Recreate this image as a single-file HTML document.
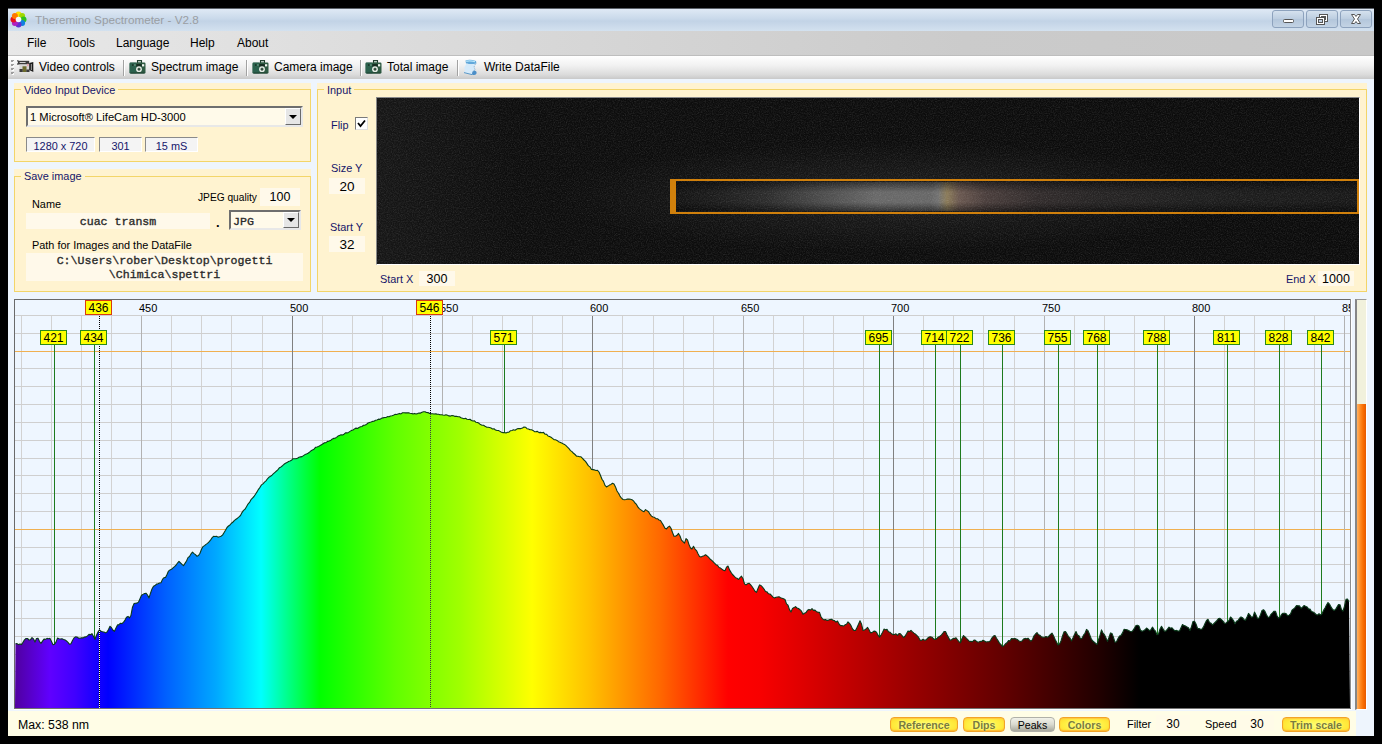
<!DOCTYPE html>
<html><head><meta charset="utf-8"><title>Theremino Spectrometer - V2.8</title>
<style>
*{box-sizing:border-box;margin:0;padding:0}
html,body{width:1382px;height:744px;overflow:hidden;background:#000}
body{font-family:"Liberation Sans",sans-serif;font-size:11px;color:#000;position:relative}
.abs,.abs *{position:absolute}
#win{position:absolute;left:8px;top:8px;width:1366px;height:728px;background:#eef5fd;overflow:hidden;border-top:1px solid #5a6068}
#win>*{margin-left:1px}
#win>#title,#win>#menu,#win>#tool{margin-left:0;width:1366px}
#title>*,#menu>*,#tool>*{margin-left:1px}
#title{left:0;top:0;width:1365px;height:22px;background:linear-gradient(#dfe9f5 0%,#c9d9ea 45%,#c2d3e6 55%,#d3e1ef 100%)}
#title .t{left:26px;top:4px;font-size:11.7px;color:#9a9ea3;white-space:nowrap}
.cap{top:1px;width:32px;height:18px;border:1px solid #8da2bd;border-radius:3px;background:linear-gradient(#d5e1ee,#bccde0 50%,#b3c6db 51%,#c3d3e4)}
#menu{left:0;top:22px;width:1365px;height:25px;background:linear-gradient(90deg,#e8e8e8 0%,#d9d9d9 35%,#cbcbcb 70%,#c8c8c8 100%);border-bottom:1px solid #bebebe}
#menu span{top:5px;font-size:12px;white-space:nowrap}
#tool{left:0;top:47px;width:1365px;height:23px;background:linear-gradient(#ffffff 0%,#f2f2f2 40%,#dcdcdc 80%,#c9c9c9 100%)}
#tool span{top:4px;font-size:12px;white-space:nowrap}
#tool i.sep{top:4px;height:16px;background:#a2a2a2;border-right:1px solid #fff;width:2px}
.panel{background:#fff3d0}
.gb{border:1px solid #f3d569}
.leg{background:#fff3d0;color:#15156a;font-size:10.9px;white-space:nowrap;padding:0 3px;line-height:13px}
.lbl{font-size:10.9px;white-space:nowrap;line-height:13px}
.navy{color:#15156a}
.tb{background:#fff9ea;text-align:center;white-space:nowrap;padding-top:1px}
.mono{font-family:"Liberation Mono",monospace;font-weight:normal;font-size:11.6px;color:#222;-webkit-text-stroke:0.35px #333}
.sunk{border:1px solid;border-color:#8a8a8a #fff #fff #8a8a8a;background:#f4f4f4;color:#15156a;text-align:center;font-size:10.9px;line-height:15px;padding-top:1px}
.combo{border:2px solid;border-color:#6e6e6e #e8e8e8 #e8e8e8 #6e6e6e;background:#fffaea}
.drop{background:#e6e6e6;border:1px solid;border-color:#fff #6a6a6a #6a6a6a #fff}
.drop:after{content:"";position:absolute;left:50%;top:50%;margin:-2px 0 0 -4px;border:4px solid transparent;border-top:4px solid #000;border-bottom:0}
.ax{position:absolute;top:302px;font-size:11px;line-height:12px;color:#000}
.pk{position:absolute;top:330px;width:27px;height:15px;background:#ffff00;border:1px solid #2a8a1a;font-size:12px;line-height:15px;text-align:center;color:#000}
.pk.top{top:300px;height:15px;border-color:#d83a10;width:27px}
.btn{top:6px;height:15px;border:1px solid #f2a428;border-radius:4px;background:radial-gradient(ellipse 70% 90% at 50% 55%,#ffff6e 0%,#ffee40 60%,#ffd428 100%);box-shadow:inset 0 1px 1px #ffc840,inset 0 -1px 1px #ffb830;font-weight:bold;font-size:10.6px;color:#7a7a3c;text-align:center;line-height:14px;text-shadow:0 0 2px #ffffa0}
.btn.grey{border-color:#b0b0a8;background:linear-gradient(#f2f2ea 0%,#d9d9cf 50%,#a9a99d 100%);color:#000;font-weight:normal;text-shadow:none;box-shadow:none}
</style></head>
<body>
<div id="win" class="abs">
  <div id="title">
    <svg style="left:1px;top:2px" width="17" height="17" viewBox="-8.5 -8.5 17 17">
      <g>
        <circle cx="0" cy="-5" r="3" fill="#ffe000"/><circle cx="3.6" cy="-3.6" r="3" fill="#a0d800"/><circle cx="5" cy="0" r="3" fill="#30c020"/><circle cx="3.6" cy="3.6" r="3" fill="#1080e0"/><circle cx="0" cy="5" r="3" fill="#6030d0"/><circle cx="-3.6" cy="3.6" r="3" fill="#b020c0"/><circle cx="-5" cy="0" r="3" fill="#e81020"/><circle cx="-3.6" cy="-3.6" r="3" fill="#ff7800"/><circle cx="0" cy="0" r="2.8" fill="#f6f9fc"/>
      </g>
    </svg>
    <div class="t">Theremino Spectrometer - V2.8</div>
    <div class="cap" style="left:1263px"><svg width="30" height="16" style="left:0;top:0"><rect x="10.5" y="8.5" width="10" height="3" rx="1" fill="#fff" stroke="#555" stroke-width="1"/></svg></div>
    <div class="cap" style="left:1297px"><svg width="30" height="16" style="left:0;top:0"><rect x="12.5" y="3.5" width="8" height="7" fill="#fff" stroke="#555"/><rect x="14.5" y="5.5" width="4" height="3" fill="#c0d0e2" stroke="#555"/><rect x="9.5" y="6.5" width="8" height="7" fill="#fff" stroke="#555"/><rect x="11.5" y="8.5" width="4" height="3" fill="#c0d0e2" stroke="#555"/></svg></div>
    <div class="cap" style="left:1331px"><svg width="30" height="16" style="left:0;top:0"><path d="M10.5 3.5h3l1.5 2 1.5-2h3l-3 4.5 3 4.5h-3l-1.5-2-1.5 2h-3l3-4.5z" fill="#fff" stroke="#555" stroke-width="1"/></svg></div>
  </div>
  <div id="menu">
    <span style="left:18px">File</span><span style="left:58px">Tools</span><span style="left:107px">Language</span><span style="left:181px">Help</span><span style="left:228px">About</span>
  </div>
  <div id="tool">
    <i style="left:2px;top:4px;width:3px;height:16px;background:repeating-linear-gradient(180deg,#9c9c9c 0 2px,transparent 2px 4px);"></i>
    <i style="left:3px;top:5px;width:2px;height:16px;background:repeating-linear-gradient(180deg,#fff 0 2px,transparent 2px 4px);opacity:.9"></i>
    <i style="left:2px;top:4px;width:2px;height:16px;background:repeating-linear-gradient(180deg,#9c9c9c 0 2px,transparent 2px 4px);"></i>
    <svg style="left:8px;top:4px" width="17" height="13" viewBox="0 0 17 13"><path d="M0.500 0.300L1.800 2.200 0.500 4.600" stroke="#2e2e2e" stroke-width="1.200" fill="none"/><rect x="1.200" y="0.800" width="11" height="3.700" fill="#3c3c3c"/><rect x="2.600" y="2" width="6" height="1" fill="#cfcfcf"/><rect x="2.500" y="4.500" width="10" height="7.500" fill="#d6d6d6"/><rect x="5.500" y="6.300" width="4" height="5.700" fill="#6c6a2c"/><rect x="10" y="3.800" width="1.600" height="2.400" fill="#e8a4ac"/><rect x="2.500" y="9" width="3.200" height="3" fill="#3a3a3a"/><rect x="9.300" y="9.500" width="3.200" height="2.500" fill="#3a3a3a"/><path d="M12.200 3L16.300 2V12L12.200 10Z" fill="#1c1c1c"/><rect x="13.800" y="4" width="1.200" height="6" fill="#8e8e8e"/></svg>
    <span style="left:30px">Video controls</span>
    <i class="sep" style="left:114px"></i>
    <svg style="left:120px;top:4px" width="17" height="14" viewBox="0 0 17 14"><rect x="8.500" y="0.600" width="4" height="2.600" fill="#d4e4da" stroke="#1c3a2a" stroke-width="1.100"/><rect x="0.500" y="2.500" width="16" height="11" rx="1.200" fill="#2e5a42"/><rect x="0.500" y="2.500" width="7" height="11" rx="1.200" fill="#2a6858" opacity=".55"/><rect x="7.300" y="4" width="5.400" height="2.600" fill="#162e22"/><circle cx="10" cy="9.200" r="2.900" fill="#e6ece6"/><path d="M10 7.700v3M8.500 9.200h3" stroke="#1c3a2a" stroke-width="1.300"/><rect x="13" y="4.200" width="2.200" height="2.200" fill="#f0f5f0"/><rect x="5" y="4.500" width="1.800" height="1" fill="#7aa890"/><rect x="3" y="4.300" width="1.500" height="1.500" fill="#162e22"/><rect x="1.500" y="12.500" width="14" height="1" fill="#1e4030"/></svg>
    <span style="left:142px">Spectrum image</span>
    <i class="sep" style="left:237px"></i>
    <svg style="left:243px;top:4px" width="17" height="14" viewBox="0 0 17 14"><rect x="8.500" y="0.600" width="4" height="2.600" fill="#d4e4da" stroke="#1c3a2a" stroke-width="1.100"/><rect x="0.500" y="2.500" width="16" height="11" rx="1.200" fill="#2e5a42"/><rect x="0.500" y="2.500" width="7" height="11" rx="1.200" fill="#2a6858" opacity=".55"/><rect x="7.300" y="4" width="5.400" height="2.600" fill="#162e22"/><circle cx="10" cy="9.200" r="2.900" fill="#e6ece6"/><path d="M10 7.700v3M8.500 9.200h3" stroke="#1c3a2a" stroke-width="1.300"/><rect x="13" y="4.200" width="2.200" height="2.200" fill="#f0f5f0"/><rect x="5" y="4.500" width="1.800" height="1" fill="#7aa890"/><rect x="3" y="4.300" width="1.500" height="1.500" fill="#162e22"/><rect x="1.500" y="12.500" width="14" height="1" fill="#1e4030"/></svg>
    <span style="left:265px">Camera image</span>
    <i class="sep" style="left:351px"></i>
    <svg style="left:356px;top:4px" width="17" height="14" viewBox="0 0 17 14"><rect x="8.500" y="0.600" width="4" height="2.600" fill="#d4e4da" stroke="#1c3a2a" stroke-width="1.100"/><rect x="0.500" y="2.500" width="16" height="11" rx="1.200" fill="#2e5a42"/><rect x="0.500" y="2.500" width="7" height="11" rx="1.200" fill="#2a6858" opacity=".55"/><rect x="7.300" y="4" width="5.400" height="2.600" fill="#162e22"/><circle cx="10" cy="9.200" r="2.900" fill="#e6ece6"/><path d="M10 7.700v3M8.500 9.200h3" stroke="#1c3a2a" stroke-width="1.300"/><rect x="13" y="4.200" width="2.200" height="2.200" fill="#f0f5f0"/><rect x="5" y="4.500" width="1.800" height="1" fill="#7aa890"/><rect x="3" y="4.300" width="1.500" height="1.500" fill="#162e22"/><rect x="1.500" y="12.500" width="14" height="1" fill="#1e4030"/></svg>
    <span style="left:378px">Total image</span>
    <i class="sep" style="left:448px"></i>
    <svg style="left:454px;top:3px" width="15" height="17" viewBox="0 0 15 17"><path d="M2.500 1.500Q7 0 13 2L13.500 4.500Q8 6 3 4.500Z" fill="#62a8da"/><path d="M3.200 2.300Q7 1.300 12 2.700" stroke="#b8e6fb" stroke-width="1.200" fill="none"/><path d="M3.500 4.500Q8 6 12.500 4.800L11 8 12 10.500 10 13 9 15.500 1 13.500 2 11 1.200 9Z" fill="#d5eafa"/><path d="M9 15.500Q9 11.500 11.500 11.500 14 12 13.500 14.500 12 17 9 15.500Z" fill="#4a8ec8"/><path d="M1 13.600L9 15.600" stroke="#5a98c8" stroke-width="1"/><path d="M12.500 4.800L11 8 12 10.500 10.500 12.500" stroke="#7aa8cc" stroke-width=".8" stroke-dasharray="1.500 1" fill="none"/></svg>
    <span style="left:475px">Write DataFile</span>
  </div>
  

  <!-- Video input panel -->
  <div class="panel" style="left:5px;top:74px;width:297px;height:79px"></div>
  <div class="gb" style="left:5px;top:80px;width:297px;height:73px"></div>
  <div class="leg" style="left:12px;top:75px">Video Input Device</div>
  <div class="combo" style="left:17px;top:97px;width:277px;height:21px"><div class="lbl" style="left:2px;top:3px;font-size:11.2px">1 Microsoft® LifeCam HD-3000</div><div class="drop" style="right:0;top:0;width:16px;height:17px"></div></div>
  <div class="sunk" style="left:17px;top:128px;width:69px;height:15px">1280 x 720</div>
  <div class="sunk" style="left:90px;top:128px;width:43px;height:15px">301</div>
  <div class="sunk" style="left:136px;top:128px;width:53px;height:15px">15 mS</div>

  <!-- Save image panel -->
  <div class="panel" style="left:5px;top:160px;width:297px;height:123px"></div>
  <div class="gb" style="left:5px;top:167px;width:297px;height:116px"></div>
  <div class="leg" style="left:12px;top:161px">Save image</div>
  <div class="lbl" style="left:23px;top:189px">Name</div>
  <div class="lbl" style="left:189px;top:182px;font-size:10.2px">JPEG quality</div>
  <div class="tb" style="left:251px;top:179px;width:40px;height:18px;font-size:12.5px;line-height:17px">100</div>
  <div class="tb mono" style="left:17px;top:204px;width:184px;height:16px;line-height:16px">cuac transm</div>
  <div class="lbl" style="left:207px;top:207px;font-size:13px;font-weight:bold">.</div>
  <div class="combo" style="left:220px;top:201px;width:72px;height:20px"><div class="mono" style="left:2px;top:3px;line-height:13px;color:#222">JPG</div><div class="drop" style="right:0;top:0;width:16px;height:16px"></div></div>
  <div class="lbl" style="left:23px;top:230px">Path for Images and the DataFile</div>
  <div class="tb mono" style="left:17px;top:244px;width:277px;height:28px;line-height:14px;white-space:normal">C:\Users\rober\Desktop\progetti<br>\Chimica\spettri</div>

  <!-- Input panel -->
  <div class="panel" style="left:308px;top:74px;width:1050px;height:209px"></div>
  <div class="gb" style="left:308px;top:80px;width:1050px;height:203px"></div>
  <div class="leg" style="left:315px;top:75px">Input</div>
  <div class="lbl navy" style="left:322px;top:110px">Flip</div>
  <div style="left:346px;top:108px;width:13px;height:13px;background:#fff;border:1px solid;border-color:#7a7a7a #e0e0e0 #e0e0e0 #7a7a7a"><svg width="11" height="11" style="left:0;top:0"><path d="M2 5l2.500 3L9 2.500" stroke="#000" stroke-width="1.800" fill="none"/></svg></div>
  <div class="lbl navy" style="left:322px;top:153px">Size Y</div>
  <div class="tb" style="left:320px;top:169px;width:36px;height:16px;font-size:13.5px;line-height:16px">20</div>
  <div class="lbl navy" style="left:321px;top:212px">Start Y</div>
  <div class="tb" style="left:320px;top:227px;width:36px;height:16px;font-size:13.5px;line-height:16px">32</div>
  <div class="lbl navy" style="left:371px;top:264px">Start X</div>
  <div class="tb" style="left:410px;top:262px;width:36px;height:15px;font-size:12.5px;line-height:15px">300</div>
  <div class="lbl navy" style="left:1277px;top:264px">End X</div>
  <div class="tb" style="left:1309px;top:262px;width:36px;height:15px;font-size:12.5px;line-height:15px">1000</div>
  <!-- camera -->
  <div id="cam" style="left:367px;top:88px;width:984px;height:168px;background:linear-gradient(90deg,#161616 0,#0d0d0d 140px,#0b0b0b 100%);border:1px solid;border-color:#8a8a8a #fff #fff #8a8a8a;overflow:hidden">
    <div style="left:0;top:0;width:982px;height:166px;background:radial-gradient(ellipse 340px 55px at 520px 99px,rgba(60,60,60,.42),rgba(0,0,0,0) 100%)"></div>
    <div style="left:299px;top:84px;width:683px;height:29px;background:linear-gradient(180deg,rgba(0,0,0,.5),rgba(0,0,0,0) 35%,rgba(0,0,0,0) 70%,rgba(0,0,0,.5)),linear-gradient(90deg,#141414 0px,#1c1c1c 40px,#2c2c2c 90px,#4e4e4e 150px,#686868 200px,#676767 255px,#727272 262px,#8a7a58 271px,#6a5850 283px,#4a3e3c 310px,#322c2c 360px,#262424 420px,#1e1e1e 520px,#181818 683px)"></div>
    <svg width="982" height="166" style="left:0;top:0"><filter id="nz" x="0" y="0" width="100%" height="100%"><feTurbulence type="fractalNoise" baseFrequency="0.85" numOctaves="2" seed="4"/><feColorMatrix type="matrix" values="0 0 0 0 1  0 0 0 0 1  0 0 0 0 1  0.9 0.9 0.9 0 -1.15"/></filter><rect width="982" height="166" filter="url(#nz)" opacity=".13"/></svg>
    <div style="left:293px;top:81px;width:690px;height:35px;border:2px solid #d0800c;border-left-width:6px;border-right-width:2px;width:689px"></div>
  </div>
</div>

<svg width="1382" height="744" viewBox="0 0 1382 744" style="position:absolute;left:0;top:0" shape-rendering="crispEdges">
<defs><linearGradient id="sp" gradientUnits="userSpaceOnUse" x1="15" y1="0" x2="1350" y2="0"><stop offset="0.0000" stop-color="#5000a0"/><stop offset="0.0262" stop-color="#6000ff"/><stop offset="0.0449" stop-color="#4000ff"/><stop offset="0.0697" stop-color="#0000ff"/><stop offset="0.1131" stop-color="#0060ff"/><stop offset="0.1506" stop-color="#00a8ff"/><stop offset="0.1843" stop-color="#00ffff"/><stop offset="0.2060" stop-color="#00ff80"/><stop offset="0.2285" stop-color="#00ff00"/><stop offset="0.2846" stop-color="#60ff00"/><stop offset="0.3333" stop-color="#a0ff00"/><stop offset="0.3873" stop-color="#ffff00"/><stop offset="0.4307" stop-color="#ffc000"/><stop offset="0.4831" stop-color="#ff6800"/><stop offset="0.5341" stop-color="#ff0000"/><stop offset="0.5581" stop-color="#f80000"/><stop offset="0.5880" stop-color="#e00000"/><stop offset="0.6629" stop-color="#a00000"/><stop offset="0.7378" stop-color="#640000"/><stop offset="0.7828" stop-color="#3c0000"/><stop offset="0.8127" stop-color="#200000"/><stop offset="0.8427" stop-color="#000000"/><stop offset="1.0000" stop-color="#000000"/></linearGradient><clipPath id="cc"><rect x="15" y="300" width="1335" height="408"/></clipPath></defs>
<rect x="14" y="299" width="1337" height="410" fill="#eef6ff"/>
<g clip-path="url(#cc)">
<rect x="21" y="316" width="1" height="392" fill="#d2d2d2"/>
<rect x="51" y="316" width="1" height="392" fill="#d2d2d2"/>
<rect x="81" y="316" width="1" height="392" fill="#d2d2d2"/>
<rect x="111" y="316" width="1" height="392" fill="#d2d2d2"/>
<rect x="141" y="316" width="1" height="392" fill="#b2b2b2"/>
<rect x="171" y="316" width="1" height="392" fill="#d2d2d2"/>
<rect x="201" y="316" width="1" height="392" fill="#d2d2d2"/>
<rect x="231" y="316" width="1" height="392" fill="#d2d2d2"/>
<rect x="262" y="316" width="1" height="392" fill="#d2d2d2"/>
<rect x="292" y="316" width="1" height="392" fill="#808080"/>
<rect x="322" y="316" width="1" height="392" fill="#d2d2d2"/>
<rect x="352" y="316" width="1" height="392" fill="#d2d2d2"/>
<rect x="382" y="316" width="1" height="392" fill="#d2d2d2"/>
<rect x="412" y="316" width="1" height="392" fill="#d2d2d2"/>
<rect x="442" y="316" width="1" height="392" fill="#b2b2b2"/>
<rect x="472" y="316" width="1" height="392" fill="#d2d2d2"/>
<rect x="502" y="316" width="1" height="392" fill="#d2d2d2"/>
<rect x="532" y="316" width="1" height="392" fill="#d2d2d2"/>
<rect x="562" y="316" width="1" height="392" fill="#d2d2d2"/>
<rect x="592" y="316" width="1" height="392" fill="#808080"/>
<rect x="622" y="316" width="1" height="392" fill="#d2d2d2"/>
<rect x="653" y="316" width="1" height="392" fill="#d2d2d2"/>
<rect x="683" y="316" width="1" height="392" fill="#d2d2d2"/>
<rect x="713" y="316" width="1" height="392" fill="#d2d2d2"/>
<rect x="743" y="316" width="1" height="392" fill="#b2b2b2"/>
<rect x="773" y="316" width="1" height="392" fill="#d2d2d2"/>
<rect x="803" y="316" width="1" height="392" fill="#d2d2d2"/>
<rect x="833" y="316" width="1" height="392" fill="#d2d2d2"/>
<rect x="863" y="316" width="1" height="392" fill="#d2d2d2"/>
<rect x="893" y="316" width="1" height="392" fill="#808080"/>
<rect x="923" y="316" width="1" height="392" fill="#d2d2d2"/>
<rect x="953" y="316" width="1" height="392" fill="#d2d2d2"/>
<rect x="983" y="316" width="1" height="392" fill="#d2d2d2"/>
<rect x="1014" y="316" width="1" height="392" fill="#d2d2d2"/>
<rect x="1044" y="316" width="1" height="392" fill="#b2b2b2"/>
<rect x="1074" y="316" width="1" height="392" fill="#d2d2d2"/>
<rect x="1104" y="316" width="1" height="392" fill="#d2d2d2"/>
<rect x="1134" y="316" width="1" height="392" fill="#d2d2d2"/>
<rect x="1164" y="316" width="1" height="392" fill="#d2d2d2"/>
<rect x="1194" y="316" width="1" height="392" fill="#808080"/>
<rect x="1224" y="316" width="1" height="392" fill="#d2d2d2"/>
<rect x="1254" y="316" width="1" height="392" fill="#d2d2d2"/>
<rect x="1284" y="316" width="1" height="392" fill="#d2d2d2"/>
<rect x="1314" y="316" width="1" height="392" fill="#d2d2d2"/>
<rect x="1344" y="316" width="1" height="392" fill="#b2b2b2"/>
<rect x="15" y="315" width="1335" height="1" fill="#cfcfcf"/>
<rect x="15" y="333" width="1335" height="1" fill="#cfcfcf"/>
<rect x="15" y="351" width="1335" height="1" fill="#f0b050"/>
<rect x="15" y="368" width="1335" height="1" fill="#cfcfcf"/>
<rect x="15" y="386" width="1335" height="1" fill="#cfcfcf"/>
<rect x="15" y="404" width="1335" height="1" fill="#cfcfcf"/>
<rect x="15" y="422" width="1335" height="1" fill="#cfcfcf"/>
<rect x="15" y="440" width="1335" height="1" fill="#cfcfcf"/>
<rect x="15" y="458" width="1335" height="1" fill="#cfcfcf"/>
<rect x="15" y="475" width="1335" height="1" fill="#cfcfcf"/>
<rect x="15" y="493" width="1335" height="1" fill="#cfcfcf"/>
<rect x="15" y="511" width="1335" height="1" fill="#cfcfcf"/>
<rect x="15" y="529" width="1335" height="1" fill="#f0b050"/>
<rect x="15" y="547" width="1335" height="1" fill="#cfcfcf"/>
<rect x="15" y="564" width="1335" height="1" fill="#cfcfcf"/>
<rect x="15" y="582" width="1335" height="1" fill="#cfcfcf"/>
<rect x="15" y="600" width="1335" height="1" fill="#cfcfcf"/>
<rect x="15" y="618" width="1335" height="1" fill="#cfcfcf"/>
<rect x="15" y="636" width="1335" height="1" fill="#cfcfcf"/>
<rect x="15" y="654" width="1335" height="1" fill="#cfcfcf"/>
<rect x="15" y="671" width="1335" height="1" fill="#cfcfcf"/>
<rect x="15" y="689" width="1335" height="1" fill="#cfcfcf"/>
<rect x="15" y="707" width="1335" height="1" fill="#cfcfcf"/>
<rect x="141" y="316" width="1" height="392" fill="#b2b2b2"/>
<rect x="292" y="316" width="1" height="392" fill="#808080"/>
<rect x="442" y="316" width="1" height="392" fill="#b2b2b2"/>
<rect x="592" y="316" width="1" height="392" fill="#808080"/>
<rect x="743" y="316" width="1" height="392" fill="#b2b2b2"/>
<rect x="893" y="316" width="1" height="392" fill="#808080"/>
<rect x="1044" y="316" width="1" height="392" fill="#b2b2b2"/>
<rect x="1194" y="316" width="1" height="392" fill="#808080"/>
<rect x="1344" y="316" width="1" height="392" fill="#b2b2b2"/>
<rect x="54" y="345" width="1" height="302" fill="#1e7a1e"/>
<rect x="94" y="345" width="1" height="293" fill="#1e7a1e"/>
<rect x="504" y="345" width="1" height="89" fill="#1e7a1e"/>
<rect x="879" y="345" width="1" height="293" fill="#1e7a1e"/>
<rect x="935" y="345" width="1" height="296" fill="#1e7a1e"/>
<rect x="960" y="345" width="1" height="298" fill="#1e7a1e"/>
<rect x="1002" y="345" width="1" height="302" fill="#1e7a1e"/>
<rect x="1058" y="345" width="1" height="301" fill="#1e7a1e"/>
<rect x="1097" y="345" width="1" height="300" fill="#1e7a1e"/>
<rect x="1157" y="345" width="1" height="291" fill="#1e7a1e"/>
<rect x="1227" y="345" width="1" height="279" fill="#1e7a1e"/>
<rect x="1279" y="345" width="1" height="275" fill="#1e7a1e"/>
<rect x="1321" y="345" width="1" height="271" fill="#1e7a1e"/>
<path d="M15,708.0 L15.5,643.7 17.0,643.6 18.5,644.6 20.0,643.9 21.5,644.6 23.0,642.3 24.5,639.8 26.0,638.5 27.5,638.5 29.0,640.0 30.5,639.7 32.0,637.7 33.5,639.0 35.0,642.1 36.5,638.5 38.0,638.2 39.5,641.5 41.0,643.4 42.5,641.1 44.0,639.1 45.5,639.4 47.0,638.4 48.5,638.8 50.0,638.4 51.5,641.5 53.0,644.8 54.5,644.2 56.0,642.1 57.5,638.1 59.0,638.7 60.5,639.0 62.0,638.8 63.5,639.5 65.0,639.9 66.5,641.0 68.0,642.4 69.5,644.3 71.0,643.7 72.5,640.5 74.0,637.9 75.5,636.9 77.0,637.0 78.5,638.1 80.0,638.3 81.5,637.9 83.0,637.9 84.5,637.1 86.0,636.9 87.5,635.9 89.0,634.4 90.5,634.8 92.0,633.7 93.5,636.5 95.0,639.3 96.5,635.3 98.0,632.1 99.5,629.8 101.0,631.3 102.5,631.8 104.0,632.0 105.5,632.9 107.0,632.0 108.5,629.5 110.0,626.3 111.5,627.7 113.0,630.2 114.5,631.3 116.0,627.9 117.5,624.9 119.0,624.7 120.5,623.2 122.0,623.6 123.5,622.2 125.0,620.1 126.5,617.2 128.0,616.4 129.5,617.9 131.0,615.2 132.5,607.2 134.0,603.6 135.5,603.2 137.0,603.1 138.5,602.1 140.0,598.7 141.5,595.3 143.0,594.4 144.5,593.5 146.0,593.2 147.5,595.0 149.0,597.9 150.5,593.2 152.0,588.9 153.5,586.2 155.0,585.6 156.5,584.1 158.0,583.7 159.5,583.0 161.0,582.8 162.5,579.4 164.0,577.7 165.5,577.4 167.0,574.4 168.5,571.1 170.0,569.9 171.5,569.3 173.0,567.9 174.5,566.6 176.0,565.2 177.5,563.0 179.0,561.3 180.5,562.8 182.0,564.3 183.5,565.7 185.0,563.4 186.5,561.0 188.0,557.6 189.5,556.5 191.0,553.9 192.5,552.1 194.0,553.6 195.5,554.6 197.0,556.3 198.5,555.5 200.0,553.2 201.5,549.3 203.0,546.6 204.5,545.6 206.0,544.4 207.5,543.4 209.0,541.9 210.5,540.2 212.0,537.9 213.5,536.3 215.0,536.5 216.5,536.2 218.0,537.1 219.5,536.8 221.0,536.3 222.5,535.1 224.0,532.7 225.5,530.2 227.0,527.5 228.5,526.0 230.0,525.0 231.5,523.2 233.0,522.0 234.5,520.4 236.0,519.2 237.5,518.2 239.0,516.9 240.5,515.5 242.0,512.6 243.5,510.4 245.0,509.3 246.5,506.7 248.0,504.1 249.5,502.4 251.0,499.7 252.5,498.1 254.0,496.5 255.5,494.2 257.0,491.9 258.5,489.3 260.0,487.3 261.5,484.9 263.0,483.9 264.5,482.1 266.0,480.9 267.5,478.8 269.0,477.2 270.5,476.3 272.0,475.2 273.5,473.7 275.0,472.3 276.5,471.0 278.0,469.6 279.5,467.7 281.0,466.9 282.5,465.7 284.0,464.3 285.5,463.3 287.0,462.6 288.5,461.5 290.0,461.0 291.5,460.3 293.0,458.7 294.5,458.8 296.0,458.6 297.5,458.3 299.0,457.3 300.5,456.9 302.0,456.6 303.5,455.6 305.0,454.6 306.5,454.0 308.0,453.3 309.5,452.2 311.0,450.8 312.5,450.0 314.0,449.2 315.5,447.4 317.0,447.0 318.5,446.5 320.0,445.6 321.5,444.8 323.0,443.8 324.5,442.7 326.0,442.6 327.5,441.4 329.0,441.1 330.5,440.6 332.0,439.2 333.5,438.4 335.0,438.3 336.5,437.4 338.0,436.1 339.5,435.4 341.0,434.8 342.5,435.0 344.0,434.2 345.5,432.8 347.0,432.9 348.5,432.4 350.0,431.4 351.5,430.4 353.0,430.0 354.5,428.9 356.0,428.1 357.5,428.5 359.0,427.5 360.5,426.7 362.0,426.5 363.5,425.3 365.0,425.1 366.5,424.4 368.0,423.0 369.5,422.5 371.0,422.0 372.5,421.4 374.0,421.2 375.5,420.3 377.0,420.0 378.5,419.1 380.0,419.4 381.5,418.3 383.0,417.9 384.5,417.5 386.0,417.5 387.5,416.6 389.0,416.8 390.5,416.0 392.0,415.7 393.5,415.3 395.0,414.4 396.5,414.5 398.0,413.9 399.5,413.4 401.0,413.9 402.5,412.8 404.0,412.8 405.5,412.9 407.0,412.9 408.5,412.8 410.0,413.2 411.5,413.5 413.0,413.9 414.5,413.4 416.0,414.0 417.5,413.6 419.0,413.1 420.5,413.1 422.0,412.3 423.5,411.8 425.0,411.7 426.5,412.5 428.0,412.6 429.5,413.4 431.0,413.6 432.5,413.7 434.0,414.0 435.5,413.9 437.0,414.1 438.5,414.2 440.0,414.8 441.5,414.7 443.0,415.0 444.5,415.2 446.0,414.7 447.5,415.2 449.0,415.9 450.5,416.1 452.0,415.5 453.5,415.8 455.0,416.4 456.5,416.2 458.0,416.7 459.5,416.8 461.0,417.7 462.5,418.2 464.0,418.7 465.5,418.3 467.0,419.2 468.5,419.5 470.0,419.3 471.5,420.5 473.0,421.0 474.5,420.8 476.0,422.3 477.5,422.5 479.0,423.3 480.5,424.6 482.0,425.2 483.5,425.2 485.0,426.3 486.5,427.1 488.0,427.3 489.5,427.5 491.0,428.0 492.5,429.0 494.0,428.8 495.5,430.0 497.0,430.4 498.5,430.5 500.0,431.4 501.5,432.3 503.0,432.7 504.5,432.4 506.0,433.0 507.5,432.3 509.0,432.1 510.5,430.7 512.0,430.5 513.5,429.8 515.0,430.2 516.5,429.2 518.0,428.6 519.5,428.5 521.0,428.6 522.5,428.0 524.0,427.0 525.5,427.2 527.0,428.7 528.5,429.0 530.0,429.8 531.5,429.8 533.0,430.4 534.5,431.7 536.0,431.6 537.5,431.4 539.0,432.6 540.5,432.4 542.0,432.8 543.5,432.4 545.0,434.2 546.5,434.2 548.0,436.0 549.5,436.5 551.0,437.2 552.5,438.4 554.0,439.7 555.5,439.8 557.0,440.4 558.5,441.7 560.0,442.2 561.5,442.9 563.0,443.8 564.5,444.4 566.0,445.6 567.5,447.2 569.0,448.7 570.5,450.6 572.0,451.6 573.5,453.3 575.0,454.5 576.5,456.1 578.0,456.2 579.5,456.7 581.0,456.8 582.5,458.4 584.0,460.0 585.5,461.4 587.0,463.6 588.5,465.9 590.0,466.9 591.5,469.5 593.0,469.6 594.5,469.9 596.0,470.5 597.5,470.3 599.0,472.0 600.5,475.5 602.0,479.2 603.5,481.4 605.0,485.4 606.5,486.9 608.0,486.1 609.5,485.1 611.0,484.4 612.5,483.3 614.0,484.0 615.5,486.9 617.0,491.0 618.5,493.2 620.0,496.1 621.5,498.2 623.0,499.5 624.5,499.7 626.0,499.5 627.5,499.0 629.0,499.1 630.5,499.3 632.0,499.7 633.5,500.9 635.0,503.0 636.5,504.4 638.0,507.2 639.5,508.9 641.0,509.9 642.5,511.1 644.0,511.7 645.5,509.6 647.0,510.6 648.5,511.8 650.0,514.1 651.5,516.1 653.0,517.0 654.5,517.3 656.0,518.7 657.5,518.7 659.0,520.0 660.5,520.5 662.0,523.0 663.5,525.4 665.0,528.3 666.5,528.9 668.0,527.1 669.5,526.1 671.0,528.3 672.5,532.5 674.0,536.2 675.5,536.2 677.0,535.3 678.5,533.4 680.0,536.0 681.5,540.1 683.0,541.7 684.5,543.2 686.0,538.6 687.5,540.0 689.0,544.6 690.5,548.0 692.0,549.0 693.5,546.3 695.0,549.1 696.5,550.6 698.0,553.8 699.5,556.4 701.0,557.0 702.5,556.3 704.0,555.7 705.5,554.8 707.0,555.8 708.5,557.2 710.0,559.0 711.5,560.1 713.0,561.6 714.5,563.2 716.0,564.7 717.5,565.3 719.0,567.5 720.5,568.1 722.0,569.3 723.5,570.4 725.0,570.7 726.5,567.2 728.0,566.0 729.5,569.9 731.0,572.4 732.5,574.5 734.0,576.0 735.5,577.7 737.0,578.2 738.5,579.5 740.0,577.6 741.5,576.2 743.0,578.7 744.5,583.9 746.0,584.9 747.5,583.8 749.0,583.2 750.5,584.6 752.0,586.5 753.5,588.8 755.0,591.3 756.5,592.4 758.0,588.5 759.5,584.9 761.0,585.5 762.5,587.2 764.0,589.0 765.5,591.5 767.0,591.9 768.5,593.8 770.0,594.0 771.5,595.4 773.0,597.1 774.5,598.0 776.0,597.2 777.5,597.0 779.0,596.8 780.5,597.8 782.0,598.2 783.5,598.8 785.0,599.5 786.5,603.9 788.0,605.2 789.5,609.6 791.0,612.0 792.5,608.4 794.0,607.6 795.5,606.6 797.0,608.0 798.5,608.5 800.0,609.7 801.5,611.2 803.0,614.2 804.5,613.3 806.0,612.6 807.5,610.2 809.0,609.4 810.5,610.1 812.0,608.7 813.5,610.4 815.0,610.1 816.5,611.7 818.0,612.1 819.5,612.4 821.0,616.7 822.5,618.9 824.0,619.9 825.5,619.6 827.0,620.4 828.5,620.1 830.0,619.6 831.5,619.2 833.0,620.2 834.5,620.6 836.0,622.1 837.5,621.0 839.0,623.9 840.5,625.6 842.0,625.6 843.5,626.2 845.0,624.8 846.5,624.2 848.0,621.9 849.5,623.3 851.0,625.6 852.5,629.0 854.0,630.5 855.5,630.5 857.0,627.6 858.5,624.3 860.0,620.8 861.5,623.9 863.0,630.4 864.5,630.0 866.0,629.0 867.5,627.3 869.0,629.8 870.5,632.8 872.0,632.6 873.5,631.4 875.0,631.1 876.5,632.2 878.0,635.2 879.5,637.1 881.0,635.1 882.5,632.5 884.0,629.1 885.5,629.7 887.0,629.4 888.5,631.8 890.0,632.2 891.5,633.8 893.0,634.6 894.5,634.5 896.0,633.8 897.5,635.3 899.0,633.5 900.5,633.9 902.0,635.6 903.5,637.5 905.0,636.3 906.5,633.8 908.0,631.1 909.5,631.5 911.0,630.4 912.5,631.9 914.0,633.1 915.5,634.1 917.0,635.6 918.5,637.2 920.0,640.1 921.5,640.4 923.0,639.3 924.5,640.2 926.0,639.9 927.5,638.3 929.0,637.1 930.5,636.7 932.0,637.2 933.5,638.8 935.0,639.5 936.5,638.8 938.0,637.3 939.5,636.4 941.0,635.5 942.5,633.7 944.0,631.5 945.5,631.5 947.0,634.7 948.5,637.4 950.0,640.3 951.5,639.7 953.0,638.6 954.5,638.4 956.0,637.7 957.5,639.9 959.0,641.7 960.5,642.7 962.0,638.5 963.5,635.6 965.0,636.9 966.5,638.4 968.0,639.8 969.5,641.5 971.0,641.4 972.5,641.7 974.0,640.1 975.5,640.3 977.0,641.8 978.5,642.3 980.0,641.4 981.5,641.5 983.0,640.3 984.5,641.0 986.0,642.0 987.5,641.7 989.0,641.7 990.5,640.6 992.0,637.8 993.5,636.1 995.0,635.5 996.5,638.3 998.0,640.6 999.5,643.1 1001.0,644.7 1002.5,646.6 1004.0,645.6 1005.5,643.8 1007.0,642.8 1008.5,640.6 1010.0,640.9 1011.5,638.6 1013.0,638.8 1014.5,638.6 1016.0,638.9 1017.5,639.6 1019.0,640.9 1020.5,641.4 1022.0,640.9 1023.5,639.1 1025.0,638.4 1026.5,638.7 1028.0,638.2 1029.5,639.8 1031.0,641.2 1032.5,639.5 1034.0,635.8 1035.5,634.0 1037.0,632.6 1038.5,634.7 1040.0,635.3 1041.5,636.9 1043.0,637.3 1044.5,637.3 1046.0,636.6 1047.5,637.3 1049.0,636.0 1050.5,634.5 1052.0,633.1 1053.5,635.7 1055.0,639.3 1056.5,642.0 1058.0,645.0 1059.5,644.0 1061.0,640.9 1062.5,635.9 1064.0,631.9 1065.5,631.6 1067.0,633.9 1068.5,636.6 1070.0,637.9 1071.5,640.9 1073.0,637.8 1074.5,634.4 1076.0,631.5 1077.5,635.0 1079.0,635.7 1080.5,638.8 1082.0,638.3 1083.5,635.2 1085.0,633.3 1086.5,629.4 1088.0,630.7 1089.5,634.3 1091.0,638.3 1092.5,640.8 1094.0,642.0 1095.5,643.2 1097.0,644.5 1098.5,639.8 1100.0,635.3 1101.5,629.9 1103.0,633.1 1104.5,634.8 1106.0,638.0 1107.5,641.4 1109.0,637.3 1110.5,632.9 1112.0,633.4 1113.5,637.4 1115.0,642.3 1116.5,641.8 1118.0,638.5 1119.5,636.1 1121.0,635.4 1122.5,632.9 1124.0,629.4 1125.5,629.5 1127.0,629.8 1128.5,630.6 1130.0,631.3 1131.5,631.8 1133.0,630.4 1134.5,628.1 1136.0,625.5 1137.5,625.3 1139.0,626.1 1140.5,630.3 1142.0,631.3 1143.5,630.7 1145.0,629.8 1146.5,628.0 1148.0,629.1 1149.5,630.7 1151.0,629.6 1152.5,627.1 1154.0,629.5 1155.5,631.2 1157.0,634.7 1158.5,634.1 1160.0,628.9 1161.5,626.3 1163.0,628.8 1164.5,631.2 1166.0,630.9 1167.5,629.0 1169.0,627.2 1170.5,628.3 1172.0,627.8 1173.5,629.6 1175.0,630.7 1176.5,630.4 1178.0,631.1 1179.5,631.0 1181.0,627.8 1182.5,624.5 1184.0,625.6 1185.5,626.0 1187.0,627.1 1188.5,627.7 1190.0,630.4 1191.5,626.6 1193.0,621.5 1194.5,621.2 1196.0,624.0 1197.5,628.3 1199.0,628.6 1200.5,629.3 1202.0,629.1 1203.5,626.9 1205.0,623.4 1206.5,620.5 1208.0,619.3 1209.5,622.4 1211.0,623.2 1212.5,625.0 1214.0,623.4 1215.5,622.0 1217.0,620.4 1218.5,618.6 1220.0,618.4 1221.5,619.7 1223.0,621.1 1224.5,623.3 1226.0,623.2 1227.5,621.7 1229.0,620.4 1230.5,617.0 1232.0,618.5 1233.5,620.6 1235.0,623.8 1236.5,621.3 1238.0,620.5 1239.5,618.2 1241.0,616.9 1242.5,617.7 1244.0,619.7 1245.5,620.3 1247.0,617.0 1248.5,613.4 1250.0,615.1 1251.5,617.3 1253.0,616.8 1254.5,612.1 1256.0,615.0 1257.5,618.5 1259.0,618.1 1260.5,614.7 1262.0,610.5 1263.5,609.7 1265.0,611.4 1266.5,614.8 1268.0,617.3 1269.5,617.0 1271.0,614.3 1272.5,612.8 1274.0,611.2 1275.5,611.2 1277.0,615.7 1278.5,618.1 1280.0,617.3 1281.5,614.4 1283.0,613.3 1284.5,613.2 1286.0,613.6 1287.5,615.6 1289.0,615.2 1290.5,613.9 1292.0,610.1 1293.5,608.9 1295.0,607.6 1296.5,605.6 1298.0,605.8 1299.5,605.9 1301.0,608.2 1302.5,607.2 1304.0,605.5 1305.5,606.3 1307.0,606.9 1308.5,608.9 1310.0,609.1 1311.5,611.5 1313.0,612.0 1314.5,612.9 1316.0,614.4 1317.5,615.1 1319.0,613.7 1320.5,615.0 1322.0,613.8 1323.5,610.4 1325.0,608.1 1326.5,605.0 1328.0,602.6 1329.5,604.1 1331.0,606.9 1332.5,609.2 1334.0,610.4 1335.5,609.6 1337.0,607.1 1338.5,604.6 1340.0,604.7 1341.5,609.7 1343.0,611.2 1344.5,606.1 1346.0,599.4 1347.5,599.0 1349.0,602.1 L1350,708.0 Z" fill="url(#sp)" shape-rendering="geometricPrecision"/>
<path d="M15.5,643.7 L17.0,643.6 L18.5,644.6 L20.0,643.9 L21.5,644.6 L23.0,642.3 L24.5,639.8 L26.0,638.5 L27.5,638.5 L29.0,640.0 L30.5,639.7 L32.0,637.7 L33.5,639.0 L35.0,642.1 L36.5,638.5 L38.0,638.2 L39.5,641.5 L41.0,643.4 L42.5,641.1 L44.0,639.1 L45.5,639.4 L47.0,638.4 L48.5,638.8 L50.0,638.4 L51.5,641.5 L53.0,644.8 L54.5,644.2 L56.0,642.1 L57.5,638.1 L59.0,638.7 L60.5,639.0 L62.0,638.8 L63.5,639.5 L65.0,639.9 L66.5,641.0 L68.0,642.4 L69.5,644.3 L71.0,643.7 L72.5,640.5 L74.0,637.9 L75.5,636.9 L77.0,637.0 L78.5,638.1 L80.0,638.3 L81.5,637.9 L83.0,637.9 L84.5,637.1 L86.0,636.9 L87.5,635.9 L89.0,634.4 L90.5,634.8 L92.0,633.7 L93.5,636.5 L95.0,639.3 L96.5,635.3 L98.0,632.1 L99.5,629.8 L101.0,631.3 L102.5,631.8 L104.0,632.0 L105.5,632.9 L107.0,632.0 L108.5,629.5 L110.0,626.3 L111.5,627.7 L113.0,630.2 L114.5,631.3 L116.0,627.9 L117.5,624.9 L119.0,624.7 L120.5,623.2 L122.0,623.6 L123.5,622.2 L125.0,620.1 L126.5,617.2 L128.0,616.4 L129.5,617.9 L131.0,615.2 L132.5,607.2 L134.0,603.6 L135.5,603.2 L137.0,603.1 L138.5,602.1 L140.0,598.7 L141.5,595.3 L143.0,594.4 L144.5,593.5 L146.0,593.2 L147.5,595.0 L149.0,597.9 L150.5,593.2 L152.0,588.9 L153.5,586.2 L155.0,585.6 L156.5,584.1 L158.0,583.7 L159.5,583.0 L161.0,582.8 L162.5,579.4 L164.0,577.7 L165.5,577.4 L167.0,574.4 L168.5,571.1 L170.0,569.9 L171.5,569.3 L173.0,567.9 L174.5,566.6 L176.0,565.2 L177.5,563.0 L179.0,561.3 L180.5,562.8 L182.0,564.3 L183.5,565.7 L185.0,563.4 L186.5,561.0 L188.0,557.6 L189.5,556.5 L191.0,553.9 L192.5,552.1 L194.0,553.6 L195.5,554.6 L197.0,556.3 L198.5,555.5 L200.0,553.2 L201.5,549.3 L203.0,546.6 L204.5,545.6 L206.0,544.4 L207.5,543.4 L209.0,541.9 L210.5,540.2 L212.0,537.9 L213.5,536.3 L215.0,536.5 L216.5,536.2 L218.0,537.1 L219.5,536.8 L221.0,536.3 L222.5,535.1 L224.0,532.7 L225.5,530.2 L227.0,527.5 L228.5,526.0 L230.0,525.0 L231.5,523.2 L233.0,522.0 L234.5,520.4 L236.0,519.2 L237.5,518.2 L239.0,516.9 L240.5,515.5 L242.0,512.6 L243.5,510.4 L245.0,509.3 L246.5,506.7 L248.0,504.1 L249.5,502.4 L251.0,499.7 L252.5,498.1 L254.0,496.5 L255.5,494.2 L257.0,491.9 L258.5,489.3 L260.0,487.3 L261.5,484.9 L263.0,483.9 L264.5,482.1 L266.0,480.9 L267.5,478.8 L269.0,477.2 L270.5,476.3 L272.0,475.2 L273.5,473.7 L275.0,472.3 L276.5,471.0 L278.0,469.6 L279.5,467.7 L281.0,466.9 L282.5,465.7 L284.0,464.3 L285.5,463.3 L287.0,462.6 L288.5,461.5 L290.0,461.0 L291.5,460.3 L293.0,458.7 L294.5,458.8 L296.0,458.6 L297.5,458.3 L299.0,457.3 L300.5,456.9 L302.0,456.6 L303.5,455.6 L305.0,454.6 L306.5,454.0 L308.0,453.3 L309.5,452.2 L311.0,450.8 L312.5,450.0 L314.0,449.2 L315.5,447.4 L317.0,447.0 L318.5,446.5 L320.0,445.6 L321.5,444.8 L323.0,443.8 L324.5,442.7 L326.0,442.6 L327.5,441.4 L329.0,441.1 L330.5,440.6 L332.0,439.2 L333.5,438.4 L335.0,438.3 L336.5,437.4 L338.0,436.1 L339.5,435.4 L341.0,434.8 L342.5,435.0 L344.0,434.2 L345.5,432.8 L347.0,432.9 L348.5,432.4 L350.0,431.4 L351.5,430.4 L353.0,430.0 L354.5,428.9 L356.0,428.1 L357.5,428.5 L359.0,427.5 L360.5,426.7 L362.0,426.5 L363.5,425.3 L365.0,425.1 L366.5,424.4 L368.0,423.0 L369.5,422.5 L371.0,422.0 L372.5,421.4 L374.0,421.2 L375.5,420.3 L377.0,420.0 L378.5,419.1 L380.0,419.4 L381.5,418.3 L383.0,417.9 L384.5,417.5 L386.0,417.5 L387.5,416.6 L389.0,416.8 L390.5,416.0 L392.0,415.7 L393.5,415.3 L395.0,414.4 L396.5,414.5 L398.0,413.9 L399.5,413.4 L401.0,413.9 L402.5,412.8 L404.0,412.8 L405.5,412.9 L407.0,412.9 L408.5,412.8 L410.0,413.2 L411.5,413.5 L413.0,413.9 L414.5,413.4 L416.0,414.0 L417.5,413.6 L419.0,413.1 L420.5,413.1 L422.0,412.3 L423.5,411.8 L425.0,411.7 L426.5,412.5 L428.0,412.6 L429.5,413.4 L431.0,413.6 L432.5,413.7 L434.0,414.0 L435.5,413.9 L437.0,414.1 L438.5,414.2 L440.0,414.8 L441.5,414.7 L443.0,415.0 L444.5,415.2 L446.0,414.7 L447.5,415.2 L449.0,415.9 L450.5,416.1 L452.0,415.5 L453.5,415.8 L455.0,416.4 L456.5,416.2 L458.0,416.7 L459.5,416.8 L461.0,417.7 L462.5,418.2 L464.0,418.7 L465.5,418.3 L467.0,419.2 L468.5,419.5 L470.0,419.3 L471.5,420.5 L473.0,421.0 L474.5,420.8 L476.0,422.3 L477.5,422.5 L479.0,423.3 L480.5,424.6 L482.0,425.2 L483.5,425.2 L485.0,426.3 L486.5,427.1 L488.0,427.3 L489.5,427.5 L491.0,428.0 L492.5,429.0 L494.0,428.8 L495.5,430.0 L497.0,430.4 L498.5,430.5 L500.0,431.4 L501.5,432.3 L503.0,432.7 L504.5,432.4 L506.0,433.0 L507.5,432.3 L509.0,432.1 L510.5,430.7 L512.0,430.5 L513.5,429.8 L515.0,430.2 L516.5,429.2 L518.0,428.6 L519.5,428.5 L521.0,428.6 L522.5,428.0 L524.0,427.0 L525.5,427.2 L527.0,428.7 L528.5,429.0 L530.0,429.8 L531.5,429.8 L533.0,430.4 L534.5,431.7 L536.0,431.6 L537.5,431.4 L539.0,432.6 L540.5,432.4 L542.0,432.8 L543.5,432.4 L545.0,434.2 L546.5,434.2 L548.0,436.0 L549.5,436.5 L551.0,437.2 L552.5,438.4 L554.0,439.7 L555.5,439.8 L557.0,440.4 L558.5,441.7 L560.0,442.2 L561.5,442.9 L563.0,443.8 L564.5,444.4 L566.0,445.6 L567.5,447.2 L569.0,448.7 L570.5,450.6 L572.0,451.6 L573.5,453.3 L575.0,454.5 L576.5,456.1 L578.0,456.2 L579.5,456.7 L581.0,456.8 L582.5,458.4 L584.0,460.0 L585.5,461.4 L587.0,463.6 L588.5,465.9 L590.0,466.9 L591.5,469.5 L593.0,469.6 L594.5,469.9 L596.0,470.5 L597.5,470.3 L599.0,472.0 L600.5,475.5 L602.0,479.2 L603.5,481.4 L605.0,485.4 L606.5,486.9 L608.0,486.1 L609.5,485.1 L611.0,484.4 L612.5,483.3 L614.0,484.0 L615.5,486.9 L617.0,491.0 L618.5,493.2 L620.0,496.1 L621.5,498.2 L623.0,499.5 L624.5,499.7 L626.0,499.5 L627.5,499.0 L629.0,499.1 L630.5,499.3 L632.0,499.7 L633.5,500.9 L635.0,503.0 L636.5,504.4 L638.0,507.2 L639.5,508.9 L641.0,509.9 L642.5,511.1 L644.0,511.7 L645.5,509.6 L647.0,510.6 L648.5,511.8 L650.0,514.1 L651.5,516.1 L653.0,517.0 L654.5,517.3 L656.0,518.7 L657.5,518.7 L659.0,520.0 L660.5,520.5 L662.0,523.0 L663.5,525.4 L665.0,528.3 L666.5,528.9 L668.0,527.1 L669.5,526.1 L671.0,528.3 L672.5,532.5 L674.0,536.2 L675.5,536.2 L677.0,535.3 L678.5,533.4 L680.0,536.0 L681.5,540.1 L683.0,541.7 L684.5,543.2 L686.0,538.6 L687.5,540.0 L689.0,544.6 L690.5,548.0 L692.0,549.0 L693.5,546.3 L695.0,549.1 L696.5,550.6 L698.0,553.8 L699.5,556.4 L701.0,557.0 L702.5,556.3 L704.0,555.7 L705.5,554.8 L707.0,555.8 L708.5,557.2 L710.0,559.0 L711.5,560.1 L713.0,561.6 L714.5,563.2 L716.0,564.7 L717.5,565.3 L719.0,567.5 L720.5,568.1 L722.0,569.3 L723.5,570.4 L725.0,570.7 L726.5,567.2 L728.0,566.0 L729.5,569.9 L731.0,572.4 L732.5,574.5 L734.0,576.0 L735.5,577.7 L737.0,578.2 L738.5,579.5 L740.0,577.6 L741.5,576.2 L743.0,578.7 L744.5,583.9 L746.0,584.9 L747.5,583.8 L749.0,583.2 L750.5,584.6 L752.0,586.5 L753.5,588.8 L755.0,591.3 L756.5,592.4 L758.0,588.5 L759.5,584.9 L761.0,585.5 L762.5,587.2 L764.0,589.0 L765.5,591.5 L767.0,591.9 L768.5,593.8 L770.0,594.0 L771.5,595.4 L773.0,597.1 L774.5,598.0 L776.0,597.2 L777.5,597.0 L779.0,596.8 L780.5,597.8 L782.0,598.2 L783.5,598.8 L785.0,599.5 L786.5,603.9 L788.0,605.2 L789.5,609.6 L791.0,612.0 L792.5,608.4 L794.0,607.6 L795.5,606.6 L797.0,608.0 L798.5,608.5 L800.0,609.7 L801.5,611.2 L803.0,614.2 L804.5,613.3 L806.0,612.6 L807.5,610.2 L809.0,609.4 L810.5,610.1 L812.0,608.7 L813.5,610.4 L815.0,610.1 L816.5,611.7 L818.0,612.1 L819.5,612.4 L821.0,616.7 L822.5,618.9 L824.0,619.9 L825.5,619.6 L827.0,620.4 L828.5,620.1 L830.0,619.6 L831.5,619.2 L833.0,620.2 L834.5,620.6 L836.0,622.1 L837.5,621.0 L839.0,623.9 L840.5,625.6 L842.0,625.6 L843.5,626.2 L845.0,624.8 L846.5,624.2 L848.0,621.9 L849.5,623.3 L851.0,625.6 L852.5,629.0 L854.0,630.5 L855.5,630.5 L857.0,627.6 L858.5,624.3 L860.0,620.8 L861.5,623.9 L863.0,630.4 L864.5,630.0 L866.0,629.0 L867.5,627.3 L869.0,629.8 L870.5,632.8 L872.0,632.6 L873.5,631.4 L875.0,631.1 L876.5,632.2 L878.0,635.2 L879.5,637.1 L881.0,635.1 L882.5,632.5 L884.0,629.1 L885.5,629.7 L887.0,629.4 L888.5,631.8 L890.0,632.2 L891.5,633.8 L893.0,634.6 L894.5,634.5 L896.0,633.8 L897.5,635.3 L899.0,633.5 L900.5,633.9 L902.0,635.6 L903.5,637.5 L905.0,636.3 L906.5,633.8 L908.0,631.1 L909.5,631.5 L911.0,630.4 L912.5,631.9 L914.0,633.1 L915.5,634.1 L917.0,635.6 L918.5,637.2 L920.0,640.1 L921.5,640.4 L923.0,639.3 L924.5,640.2 L926.0,639.9 L927.5,638.3 L929.0,637.1 L930.5,636.7 L932.0,637.2 L933.5,638.8 L935.0,639.5 L936.5,638.8 L938.0,637.3 L939.5,636.4 L941.0,635.5 L942.5,633.7 L944.0,631.5 L945.5,631.5 L947.0,634.7 L948.5,637.4 L950.0,640.3 L951.5,639.7 L953.0,638.6 L954.5,638.4 L956.0,637.7 L957.5,639.9 L959.0,641.7 L960.5,642.7 L962.0,638.5 L963.5,635.6 L965.0,636.9 L966.5,638.4 L968.0,639.8 L969.5,641.5 L971.0,641.4 L972.5,641.7 L974.0,640.1 L975.5,640.3 L977.0,641.8 L978.5,642.3 L980.0,641.4 L981.5,641.5 L983.0,640.3 L984.5,641.0 L986.0,642.0 L987.5,641.7 L989.0,641.7 L990.5,640.6 L992.0,637.8 L993.5,636.1 L995.0,635.5 L996.5,638.3 L998.0,640.6 L999.5,643.1 L1001.0,644.7 L1002.5,646.6 L1004.0,645.6 L1005.5,643.8 L1007.0,642.8 L1008.5,640.6 L1010.0,640.9 L1011.5,638.6 L1013.0,638.8 L1014.5,638.6 L1016.0,638.9 L1017.5,639.6 L1019.0,640.9 L1020.5,641.4 L1022.0,640.9 L1023.5,639.1 L1025.0,638.4 L1026.5,638.7 L1028.0,638.2 L1029.5,639.8 L1031.0,641.2 L1032.5,639.5 L1034.0,635.8 L1035.5,634.0 L1037.0,632.6 L1038.5,634.7 L1040.0,635.3 L1041.5,636.9 L1043.0,637.3 L1044.5,637.3 L1046.0,636.6 L1047.5,637.3 L1049.0,636.0 L1050.5,634.5 L1052.0,633.1 L1053.5,635.7 L1055.0,639.3 L1056.5,642.0 L1058.0,645.0 L1059.5,644.0 L1061.0,640.9 L1062.5,635.9 L1064.0,631.9 L1065.5,631.6 L1067.0,633.9 L1068.5,636.6 L1070.0,637.9 L1071.5,640.9 L1073.0,637.8 L1074.5,634.4 L1076.0,631.5 L1077.5,635.0 L1079.0,635.7 L1080.5,638.8 L1082.0,638.3 L1083.5,635.2 L1085.0,633.3 L1086.5,629.4 L1088.0,630.7 L1089.5,634.3 L1091.0,638.3 L1092.5,640.8 L1094.0,642.0 L1095.5,643.2 L1097.0,644.5 L1098.5,639.8 L1100.0,635.3 L1101.5,629.9 L1103.0,633.1 L1104.5,634.8 L1106.0,638.0 L1107.5,641.4 L1109.0,637.3 L1110.5,632.9 L1112.0,633.4 L1113.5,637.4 L1115.0,642.3 L1116.5,641.8 L1118.0,638.5 L1119.5,636.1 L1121.0,635.4 L1122.5,632.9 L1124.0,629.4 L1125.5,629.5 L1127.0,629.8 L1128.5,630.6 L1130.0,631.3 L1131.5,631.8 L1133.0,630.4 L1134.5,628.1 L1136.0,625.5 L1137.5,625.3 L1139.0,626.1 L1140.5,630.3 L1142.0,631.3 L1143.5,630.7 L1145.0,629.8 L1146.5,628.0 L1148.0,629.1 L1149.5,630.7 L1151.0,629.6 L1152.5,627.1 L1154.0,629.5 L1155.5,631.2 L1157.0,634.7 L1158.5,634.1 L1160.0,628.9 L1161.5,626.3 L1163.0,628.8 L1164.5,631.2 L1166.0,630.9 L1167.5,629.0 L1169.0,627.2 L1170.5,628.3 L1172.0,627.8 L1173.5,629.6 L1175.0,630.7 L1176.5,630.4 L1178.0,631.1 L1179.5,631.0 L1181.0,627.8 L1182.5,624.5 L1184.0,625.6 L1185.5,626.0 L1187.0,627.1 L1188.5,627.7 L1190.0,630.4 L1191.5,626.6 L1193.0,621.5 L1194.5,621.2 L1196.0,624.0 L1197.5,628.3 L1199.0,628.6 L1200.5,629.3 L1202.0,629.1 L1203.5,626.9 L1205.0,623.4 L1206.5,620.5 L1208.0,619.3 L1209.5,622.4 L1211.0,623.2 L1212.5,625.0 L1214.0,623.4 L1215.5,622.0 L1217.0,620.4 L1218.5,618.6 L1220.0,618.4 L1221.5,619.7 L1223.0,621.1 L1224.5,623.3 L1226.0,623.2 L1227.5,621.7 L1229.0,620.4 L1230.5,617.0 L1232.0,618.5 L1233.5,620.6 L1235.0,623.8 L1236.5,621.3 L1238.0,620.5 L1239.5,618.2 L1241.0,616.9 L1242.5,617.7 L1244.0,619.7 L1245.5,620.3 L1247.0,617.0 L1248.5,613.4 L1250.0,615.1 L1251.5,617.3 L1253.0,616.8 L1254.5,612.1 L1256.0,615.0 L1257.5,618.5 L1259.0,618.1 L1260.5,614.7 L1262.0,610.5 L1263.5,609.7 L1265.0,611.4 L1266.5,614.8 L1268.0,617.3 L1269.5,617.0 L1271.0,614.3 L1272.5,612.8 L1274.0,611.2 L1275.5,611.2 L1277.0,615.7 L1278.5,618.1 L1280.0,617.3 L1281.5,614.4 L1283.0,613.3 L1284.5,613.2 L1286.0,613.6 L1287.5,615.6 L1289.0,615.2 L1290.5,613.9 L1292.0,610.1 L1293.5,608.9 L1295.0,607.6 L1296.5,605.6 L1298.0,605.8 L1299.5,605.9 L1301.0,608.2 L1302.5,607.2 L1304.0,605.5 L1305.5,606.3 L1307.0,606.9 L1308.5,608.9 L1310.0,609.1 L1311.5,611.5 L1313.0,612.0 L1314.5,612.9 L1316.0,614.4 L1317.5,615.1 L1319.0,613.7 L1320.5,615.0 L1322.0,613.8 L1323.5,610.4 L1325.0,608.1 L1326.5,605.0 L1328.0,602.6 L1329.5,604.1 L1331.0,606.9 L1332.5,609.2 L1334.0,610.4 L1335.5,609.6 L1337.0,607.1 L1338.5,604.6 L1340.0,604.7 L1341.5,609.7 L1343.0,611.2 L1344.5,606.1 L1346.0,599.4 L1347.5,599.0 L1349.0,602.1" fill="none" stroke="#0a3a1a" stroke-width="1.1" stroke-linejoin="round" shape-rendering="geometricPrecision"/>
<line x1="99.5" y1="316" x2="99.5" y2="708" stroke="#000" stroke-width="1" stroke-dasharray="1,1"/>
<line x1="99.5" y1="630" x2="99.5" y2="708" stroke="#fff" stroke-width="1" stroke-dasharray="1,1" stroke-dashoffset="1" opacity="0.95"/>
<line x1="430.5" y1="316" x2="430.5" y2="708" stroke="#000" stroke-width="1" stroke-dasharray="1,1"/>
<line x1="430.5" y1="413" x2="430.5" y2="708" stroke="#fff" stroke-width="1" stroke-dasharray="1,1" stroke-dashoffset="1" opacity="0.25"/>
</g>
<rect x="14" y="299" width="1337" height="1" fill="#6a6a6a"/>
<rect x="14" y="299" width="1" height="410" fill="#6a6a6a"/>
<rect x="1350" y="299" width="1" height="410" fill="#8c8c8c"/>
<rect x="14" y="708" width="1337" height="1" fill="#727272"/>
<rect x="14" y="709" width="1338" height="1" fill="#ffffff"/>
<rect x="1351" y="299" width="1" height="411" fill="#ffffff"/>
</svg>
<div style="position:absolute;left:15px;top:299px;width:1335px;height:410px;overflow:hidden"><div style="position:absolute;left:-15px;top:-299px;width:1382px;height:744px"><div class="ax" style="left:139px">450</div>
<div class="ax" style="left:290px">500</div>
<div class="ax" style="left:440px">550</div>
<div class="ax" style="left:590px">600</div>
<div class="ax" style="left:741px">650</div>
<div class="ax" style="left:891px">700</div>
<div class="ax" style="left:1042px">750</div>
<div class="ax" style="left:1192px">800</div>
<div class="ax" style="left:1342px">850</div>
<div class="pk" style="left:40px">421</div>
<div class="pk" style="left:80px">434</div>
<div class="pk" style="left:490px">571</div>
<div class="pk" style="left:865px">695</div>
<div class="pk" style="left:921px">714</div>
<div class="pk" style="left:946px">722</div>
<div class="pk" style="left:988px">736</div>
<div class="pk" style="left:1044px">755</div>
<div class="pk" style="left:1083px">768</div>
<div class="pk" style="left:1143px">788</div>
<div class="pk" style="left:1213px">811</div>
<div class="pk" style="left:1265px">828</div>
<div class="pk" style="left:1307px">842</div>
<div class="pk top" style="left:85px">436</div>
<div class="pk top" style="left:416px">546</div></div></div>

<!-- level meter -->
<div class="abs" style="position:absolute;left:1355px;top:299px;width:12px;height:411px;background:#f1f1dc;border-left:2px solid #868686;border-top:1px solid #9a9a9a;border-right:1px solid #fff;border-bottom:1px solid #fff">
  <div style="left:0;top:104px;width:9px;height:305px;background:linear-gradient(90deg,#ffb264 0,#ff8c24 35%,#f86c00 70%,#e65a00 100%)"></div>
</div>
<!-- status bar -->
<div class="abs" style="position:absolute;left:8px;top:711px;width:1348px;height:25px;background:#fffde6">
  <div class="lbl" style="left:10px;top:8px;font-size:12.3px">Max: 538 nm</div>
  <div class="btn" style="left:882px;width:68px">Reference</div>
  <div class="btn" style="left:955px;width:42px">Dips</div>
  <div class="btn grey" style="left:1002px;width:45px">Peaks</div>
  <div class="btn" style="left:1051px;width:51px">Colors</div>
  <div class="lbl" style="left:1119px;top:7px">Filter</div>
  <div class="tb" style="left:1148px;top:4px;width:34px;height:16px;font-size:12px;line-height:16px;background:#fffbe8">30</div>
  <div class="lbl" style="left:1197px;top:7px">Speed</div>
  <div class="tb" style="left:1232px;top:4px;width:34px;height:16px;font-size:12px;line-height:16px;background:#fffbe8">30</div>
  <div class="btn" style="left:1274px;width:68px">Trim scale</div>
</div>
</body></html>
